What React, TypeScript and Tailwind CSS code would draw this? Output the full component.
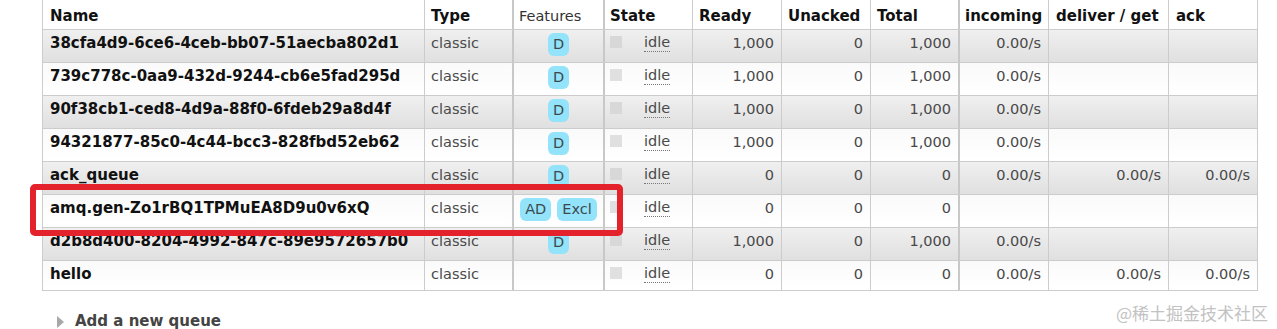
import React from "react";

type Row = {
  name: string;
  feats: string[];
  ready: string;
  unacked: string;
  total: string;
  incoming: string;
  deliver: string;
  ack: string;
};

const rows: Row[] = [
  { name: "38cfa4d9-6ce6-4ceb-bb07-51aecba802d1", feats: ["D"], ready: "1,000", unacked: "0", total: "1,000", incoming: "0.00/s", deliver: "", ack: "" },
  { name: "739c778c-0aa9-432d-9244-cb6e5fad295d", feats: ["D"], ready: "1,000", unacked: "0", total: "1,000", incoming: "0.00/s", deliver: "", ack: "" },
  { name: "90f38cb1-ced8-4d9a-88f0-6fdeb29a8d4f", feats: ["D"], ready: "1,000", unacked: "0", total: "1,000", incoming: "0.00/s", deliver: "", ack: "" },
  { name: "94321877-85c0-4c44-bcc3-828fbd52eb62", feats: ["D"], ready: "1,000", unacked: "0", total: "1,000", incoming: "0.00/s", deliver: "", ack: "" },
  { name: "ack_queue", feats: ["D"], ready: "0", unacked: "0", total: "0", incoming: "0.00/s", deliver: "0.00/s", ack: "0.00/s" },
  { name: "amq.gen-Zo1rBQ1TPMuEA8D9u0v6xQ", feats: ["AD", "Excl"], ready: "0", unacked: "0", total: "0", incoming: "", deliver: "", ack: "" },
  { name: "d2b8d400-8204-4992-847c-89e9572657b0", feats: ["D"], ready: "1,000", unacked: "0", total: "1,000", incoming: "0.00/s", deliver: "", ack: "" },
  { name: "hello", feats: [], ready: "0", unacked: "0", total: "0", incoming: "0.00/s", deliver: "0.00/s", ack: "0.00/s" },
];

const grid =
  "grid grid-cols-[382px_88px_91px_89px_89px_89px_88px_90px_120px_89px]";

const cell = "border-l border-[#cccccc] pt-[4px] leading-[18px]";
const thick = "border-l-2 border-[#c8c8c8] pt-[4px] leading-[18px]";
const num = "text-right pr-[7px] text-[#484848] text-[14.5px]";

function Badge({ t }: { t: string }) {
  return (
    <span className="inline-block h-[23px] leading-[23px] px-[5px] rounded-[6px] bg-[#93e3fa] text-[#3c4a50] text-[14.5px]">
      {t}
    </span>
  );
}

export default function App() {
  return (
    <div className="relative w-[1277px] h-[329px] overflow-hidden bg-white font-['DejaVu_Sans',Verdana,sans-serif]">
      <div className="ml-[42px] w-[1216px] border-r border-[#cccccc] border-b">
        {/* header */}
        <div className={`${grid} h-[30px] border-b border-[#cccccc] bg-white text-[15px] text-[#111]`}>
          <div className="border-l border-[#cccccc] pt-[7px] leading-[18px] pl-[7px] font-bold">Name</div>
          <div className="border-l border-[#cccccc] pt-[7px] leading-[18px] pl-[6px] font-bold">Type</div>
          <div className="border-l-2 border-[#c8c8c8] pt-[7px] leading-[18px] pl-[5px] text-[14.5px] text-[#333]">Features</div>
          <div className="border-l-2 border-[#c8c8c8] pt-[7px] leading-[18px] pl-[5px] font-bold">State</div>
          <div className="border-l border-[#cccccc] pt-[7px] leading-[18px] pl-[6px] font-bold">Ready</div>
          <div className="border-l border-[#cccccc] pt-[7px] leading-[18px] pl-[6px] font-bold">Unacked</div>
          <div className="border-l border-[#cccccc] pt-[7px] leading-[18px] pl-[6px] font-bold">Total</div>
          <div className="border-l-2 border-[#c8c8c8] pt-[7px] leading-[18px] pl-[5px] font-bold">incoming</div>
          <div className="border-l border-[#cccccc] pt-[7px] leading-[18px] pl-[7px] font-bold">deliver / get</div>
          <div className="border-l border-[#cccccc] pt-[7px] leading-[18px] pl-[7px] font-bold">ack</div>
        </div>
        {rows.map((r, i) => {
          const alt1 = i % 2 === 0;
          const h = r.feats.length > 0 ? "h-[33px]" : "h-[29px]";
          const bg = alt1
            ? "bg-linear-to-b from-[#f0f0f0] to-[#e0e0e0]"
            : "bg-linear-to-b from-[#fafafa] to-[#ffffff]";
          return (
            <div
              key={r.name}
              className={`${grid} ${h} ${bg} border-b border-[#cccccc] last:border-b-0`}
            >
              <div className={`${cell} pl-[7px] font-bold text-[15px] text-[#111] whitespace-nowrap`}>{r.name}</div>
              <div className={`${cell} pl-[6px] text-[14.5px] text-[#4a4a4a]`}>classic</div>
              <div className="border-l-2 border-[#c8c8c8] pt-[3px] flex justify-center gap-[6px]">
                {r.feats.map((f) => (
                  <Badge key={f} t={f} />
                ))}
              </div>
              <div className={`${thick} pl-[5px] flex items-start`}>
                <span className={`mt-[2px] w-[12px] h-[12px] ${alt1 ? "bg-[#d8d8d8]" : "bg-[#e0e0e0]"}`} />
                <span className="ml-[22px] text-[14.5px] text-[#4a4a4a] leading-[17px] border-b border-dotted border-[#777]">idle</span>
              </div>
              <div className={`${cell} ${num}`}>{r.ready}</div>
              <div className={`${cell} ${num}`}>{r.unacked}</div>
              <div className={`${cell} ${num}`}>{r.total}</div>
              <div className={`${thick} ${num}`}>{r.incoming}</div>
              <div className={`${cell} ${num}`}>{r.deliver}</div>
              <div className={`${cell} ${num}`}>{r.ack}</div>
            </div>
          );
        })}
      </div>

      <div className="mt-[21px] ml-[57px] flex items-center leading-[18px]">
        <svg width="7" height="12" viewBox="0 0 7 12" className="mt-[1px]">
          <polygon points="0,0 7,6 0,12" fill="#a8a8a8" />
        </svg>
        <span className="ml-[11px] font-bold text-[15px] text-[#444]">Add a new queue</span>
      </div>

      {/* annotation box */}
      <div className="absolute left-[30px] top-[184px] w-[593px] h-[52px] border-[6px] border-[#e3222b] rounded-[5px]" />

      {/* watermark */}
      <div className="absolute right-[9px] top-[302px] text-[17px] leading-[22px] text-[#c2c2c2] font-['Noto_Sans_CJK_SC',sans-serif]">
        @稀土掘金技术社区
      </div>
    </div>
  );
}
